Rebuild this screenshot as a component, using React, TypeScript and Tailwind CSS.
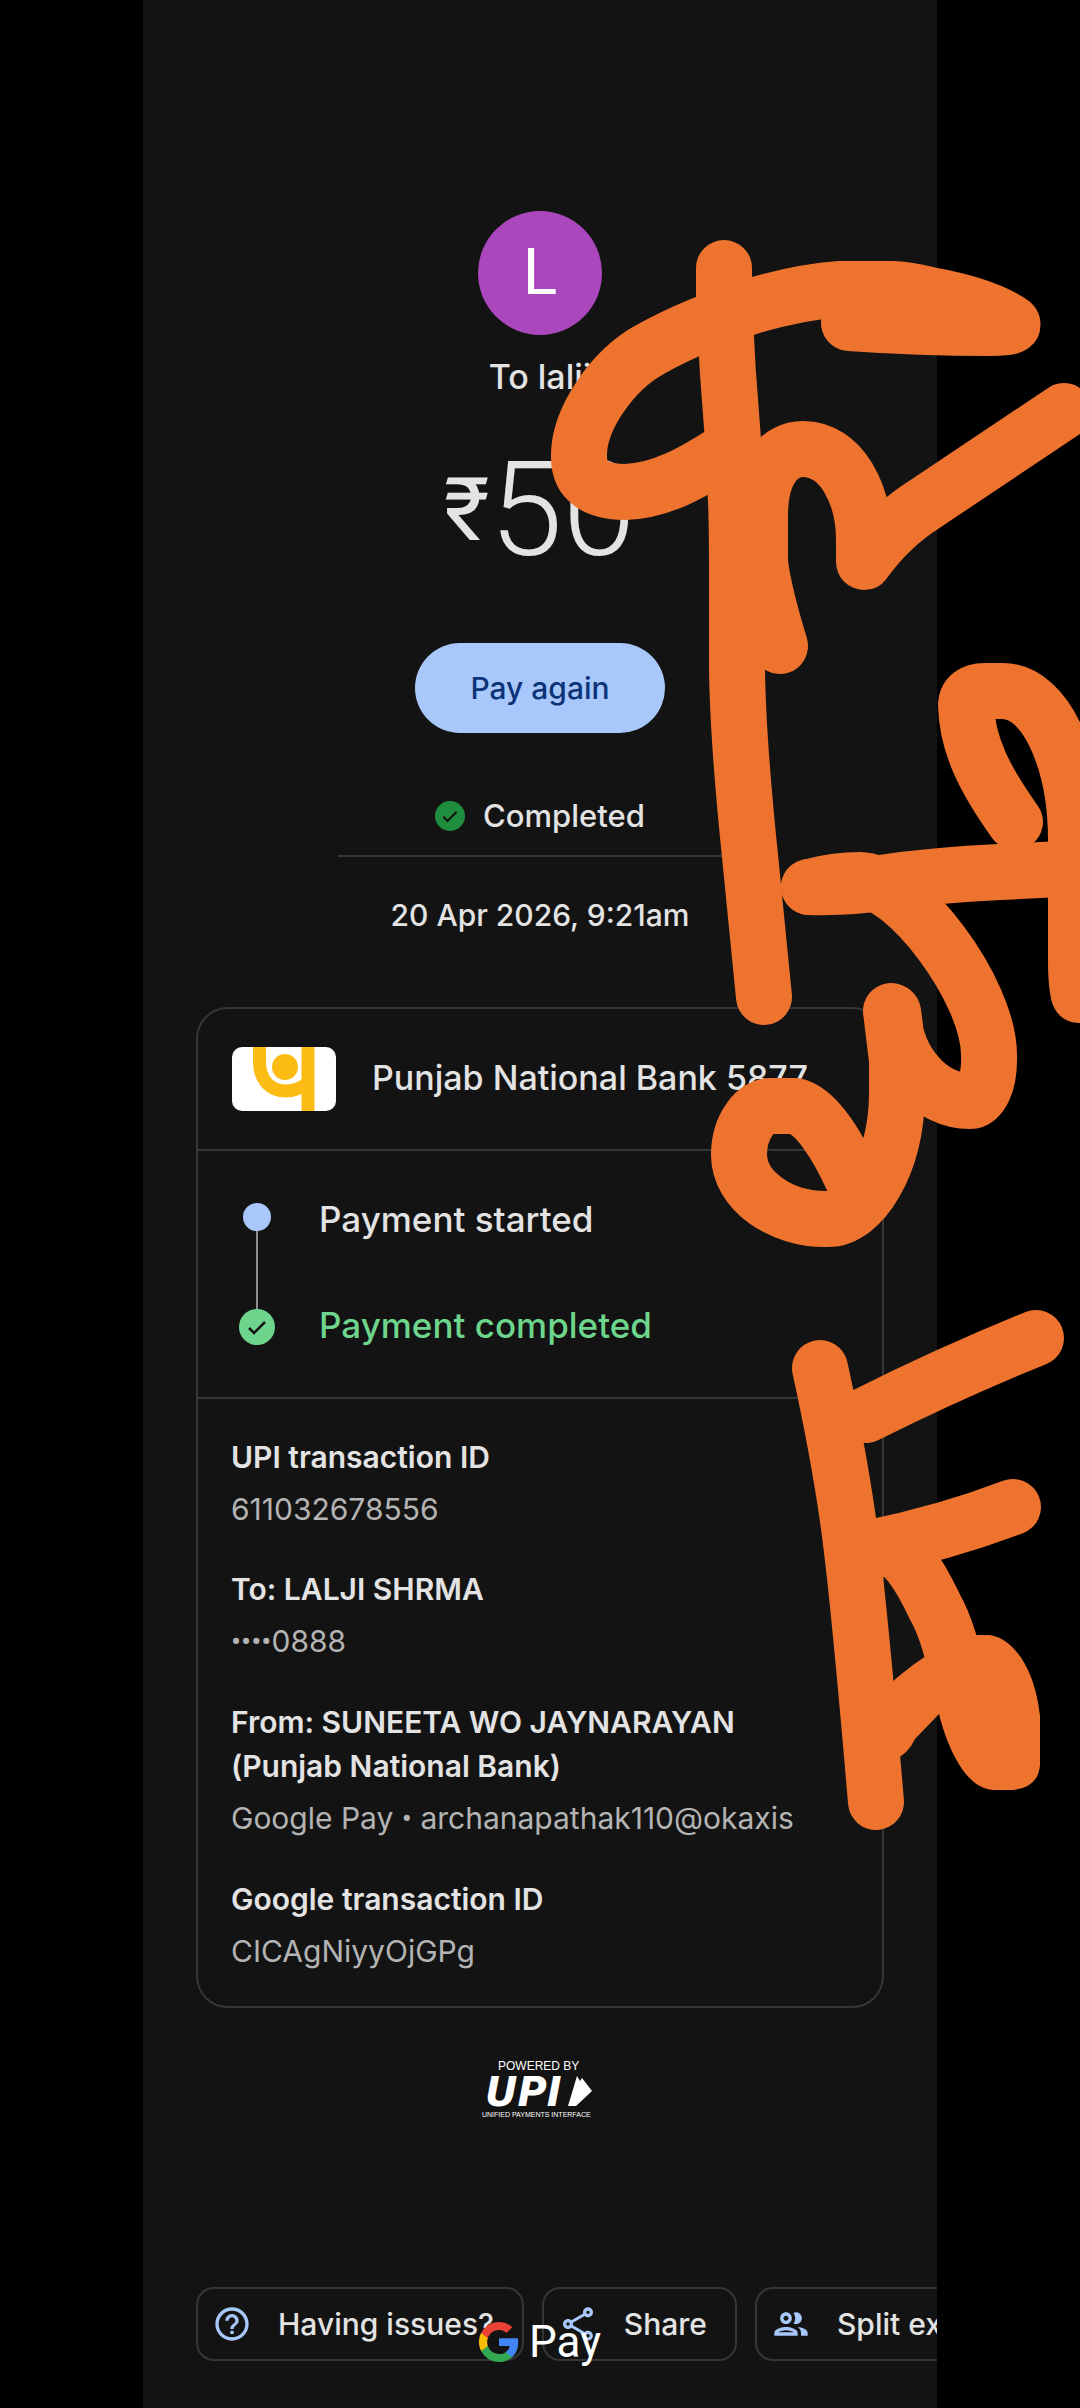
import { ReactNode } from "react";
import { MdHelpOutline, MdOutlineGroup, MdOutlineShare } from "react-icons/md";

type Detail = { label: string; value: string };

const details: Detail[] = [
  { label: "UPI transaction ID", value: "611032678556" },
  { label: "To: LALJI SHRMA", value: "••••0888" },
  {
    label: "From: SUNEETA WO JAYNARAYAN (Punjab National Bank)",
    value: "Google Pay • archanapathak110@okaxis",
  },
  { label: "Google transaction ID", value: "CICAgNiyyOjGPg" },
];

// freehand marker strokes, drawn on a 1080 wide canvas
const inkStrokes = [
  "M724 268 V300 Q727 370 733 440 Q737 500 737 560 V670 Q738 740 750 856 L764 997",
  "M849 323 Q920 328 990 328 Q1020 328 1010 322 Q985 305 930 295 Q905 289 893 289 H840 Q800 292 752 306 Q690 327 651 349 C612 370 578 420 579 457 C579 482 598 492 625 492 C660 491 692 474 734 446",
  "M780 646 Q763 590 760 562 V515 C760 470 780 449 803 449 C842 449 864 495 864 540 V562 Q890 526 925 504 L1064 411",
  "M1015 822 C985 780 967 745 966 705 Q967 691 985 691 H1003 C1048 692 1076 765 1076 840 V960 Q1076 985 1079 995",
  "M809 887 Q850 888 880 883 Q935 875 1000 872 L1080 868",
  "M809 887 Q835 880 860 880 C905 880 989 990 989 1055 C990 1085 980 1101 970 1101 C930 1101 895 1062 893 1012 Q898 1045 897 1060 V1095 C896 1165 862 1219 828 1219 C780 1220 739 1190 739 1155 C739 1125 757 1106 770 1106 H795 C815 1110 837 1144 853 1180",
  "M891 1011 L897 1060",
  "M820 1368 Q838 1450 848 1520 Q858 1590 876 1802",
  "M866 1415 Q950 1373 1036 1338",
  "M870 1548 Q945 1533 1013 1507",
  "M890 1550 Q908 1550 935 1607 Q950 1634 958 1680",
];

const inkBlob =
  "M880 1693 Q925 1650 968 1635 H990 C1018 1640 1036 1676 1040 1716 V1765 Q1038 1791 1005 1790 H993 C962 1788 945 1738 939 1714 L915 1739 Q908 1754 894 1760 Z";

function CheckDot({ className, mark }: { className: string; mark: string }) {
  return (
    <svg viewBox="0 0 36 36" className={className} aria-hidden="true">
      <circle cx="18" cy="18" r="18" fill="currentColor" />
      <path d="M10 19l5 5 11-11" fill="none" stroke={mark} strokeWidth="2.5" />
    </svg>
  );
}

function BankLogo() {
  return (
    <svg viewBox="0 0 104 64" className="h-16 w-[104px] shrink-0 rounded-[10px] bg-white" aria-hidden="true">
      <path d="M27.5 0V14C27.5 34 39 44 54 44C62 44 69 41 76 36" fill="none" stroke="#fcbc14" strokeWidth="13" />
      <path d="M76 0V64" stroke="#fcbc14" strokeWidth="13" />
      <circle cx="53" cy="20" r="13" fill="#fcbc14" />
    </svg>
  );
}

function UpiLogo() {
  return (
    <svg viewBox="0 0 116 60" className="h-[60px] w-[116px] fill-white" role="img" aria-label="Powered by UPI">
      <text x="16" y="11" fontSize="12" className="font-['Liberation_Sans',sans-serif]">
        POWERED BY
      </text>
      <text x="3" y="47" fontSize="40" className="font-['DejaVu_Sans',sans-serif] font-bold italic">
        UPI
      </text>
      <path d="M95 17l3 5 2-3 10 13-16 15h-8z" />
      <text x="0" y="58" fontSize="7" className="font-['Liberation_Sans',sans-serif]">
        UNIFIED PAYMENTS INTERFACE
      </text>
    </svg>
  );
}

function GooglePayLogo() {
  return (
    <div className="flex items-center gap-2.5">
      <svg viewBox="1 1 22 22" className="size-10" aria-hidden="true">
        <path fill="#4285F4" d="M22.56 12.25c0-.78-.07-1.53-.2-2.25H12v4.26h5.92c-.26 1.37-1.04 2.53-2.21 3.31v2.77h3.57c2.08-1.92 3.28-4.74 3.28-8.09z" />
        <path fill="#34A853" d="M12 23c2.97 0 5.46-.98 7.28-2.66l-3.57-2.77c-.98.66-2.23 1.06-3.71 1.06-2.86 0-5.29-1.93-6.16-4.53H2.18v2.84C3.99 20.53 7.7 23 12 23z" />
        <path fill="#FBBC05" d="M5.84 14.09c-.22-.66-.35-1.36-.35-2.09s.13-1.43.35-2.09V7.07H2.18C1.43 8.55 1 10.22 1 12s.43 3.45 1.18 4.93l2.85-2.22.81-.62z" />
        <path fill="#EA4335" d="M12 5.38c1.62 0 3.06.56 4.21 1.64l3.15-3.15C17.45 2.09 14.97 1 12 1 7.7 1 3.99 3.47 2.18 7.07l3.66 2.84c.87-2.6 3.3-4.53 6.16-4.53z" />
      </svg>
      <span className="font-[Roboto,sans-serif] text-[44px] leading-10 text-white">Pay</span>
    </div>
  );
}

// bullets use Roboto, Inter draws them too large next to digits
function DetailValue({ text }: { text: string }) {
  return (
    <dd className="mt-2 text-[#b4b4b4]">
      {text.split(/(•+)/).map((part, i) =>
        part.startsWith("•") ? (
          <span key={i} className="font-[Roboto,sans-serif]">
            {part}
          </span>
        ) : (
          part
        )
      )}
    </dd>
  );
}

function Chip({ icon, children }: { icon: ReactNode; children: ReactNode }) {
  return (
    <button className="flex h-[74px] shrink-0 items-center gap-[26px] rounded-[18px] border-2 border-[#363636] pr-7 pl-3.5 text-[30px] font-medium text-[#e3e3e3]">
      <span className="text-[40px] text-[#a8c7fa]">{icon}</span>
      {children}
    </button>
  );
}

export default function App() {
  return (
    <div className="relative min-h-screen overflow-hidden bg-black font-[Inter,sans-serif] text-[#e3e3e3]">
      <main className="mx-auto flex min-h-screen w-full max-w-[794px] flex-col items-center overflow-hidden bg-[#131313] pt-[211px] pb-[47px]">
        <div className="flex size-[124px] items-center justify-center rounded-full bg-[#ab47bc] font-[Roboto,sans-serif] text-[64px] text-white">
          L
        </div>
        <h1 className="mt-5 text-[34px] leading-[44px] font-medium">To lalji</h1>

        <p className="mt-[47px] flex items-center font-[Roboto,sans-serif] text-[132px] leading-[128px]">
          <span className="text-[88px]">₹</span>
          <span className="font-light">50</span>
        </p>

        <button className="mt-[69px] h-[90px] rounded-full bg-[#a8c7fa] px-[55px] text-[30px] font-medium text-[#0b3478]">
          Pay again
        </button>

        <div className="mt-[61px] flex items-center gap-[18px] text-[31px] leading-[44px] font-medium">
          <CheckDot className="size-[30px] text-[#1e8e3e]" mark="#131313" />
          Completed
        </div>
        <hr className="mt-[17px] w-[404px] border-t-2 border-[#363636]" />
        <time dateTime="2026-04-20T09:21" className="mt-9 text-[30px] leading-[44px] font-medium">
          20 Apr 2026, 9:21am
        </time>

        <div className="w-full px-[53px]">
          <section className="mt-[70px] rounded-[32px] border-2 border-[#363636]">
            <div className="flex h-[140px] items-center gap-9 px-[34px] text-[34px] font-medium">
              <BankLogo />
              <h2 className="pb-1">Punjab National Bank 5877</h2>
            </div>

            <div className="flex gap-11 border-y-2 border-[#363636] px-[41px] pt-[46px] pb-[50px]">
              <div className="flex flex-col items-center pt-1.5">
                <span className="size-7 rounded-full bg-[#a8c7fa]" />
                <span className="h-[78px] w-0.5 bg-[#8e8e8e]" />
                <CheckDot className="size-9 text-[#6dd58c]" mark="#131313" />
              </div>
              <ol className="flex flex-col gap-[62px] text-[35px] leading-[44px] font-medium">
                <li>Payment started</li>
                <li className="text-[#6dd58c]">Payment completed</li>
              </ol>
            </div>

            <dl className="flex flex-col gap-9 px-[33px] pt-9 pb-[33px] text-[30px] leading-[44px]">
              {details.map((d) => (
                <div key={d.label}>
                  <dt className="font-semibold">{d.label}</dt>
                  <DetailValue text={d.value} />
                </div>
              ))}
            </dl>
          </section>
        </div>

        <div className="mt-[51px]">
          <UpiLogo />
        </div>

        <div className="relative mt-[168px] w-full">
          <div className="flex gap-[18px] overflow-hidden pl-[53px]">
            <Chip icon={<MdHelpOutline />}>Having issues?</Chip>
            <Chip icon={<MdOutlineShare />}>Share</Chip>
            <Chip icon={<MdOutlineGroup />}>Split expense</Chip>
          </div>
          <div className="absolute inset-x-0 top-[35px] flex justify-center">
            <GooglePayLogo />
          </div>
        </div>
      </main>

      <svg
        viewBox="0 0 1080 2408"
        className="pointer-events-none absolute inset-x-0 top-0 w-full text-[#ee732e]"
        aria-hidden="true"
      >
        <g fill="none" stroke="currentColor" strokeWidth="56" strokeLinecap="round" strokeLinejoin="round">
          {inkStrokes.map((d) => (
            <path key={d} d={d} />
          ))}
        </g>
        <path d="M849 323 Q840 300 880 280 Q960 290 1012 325 Z" fill="currentColor" />
        <path d={inkBlob} fill="currentColor" />
      </svg>
    </div>
  );
}
